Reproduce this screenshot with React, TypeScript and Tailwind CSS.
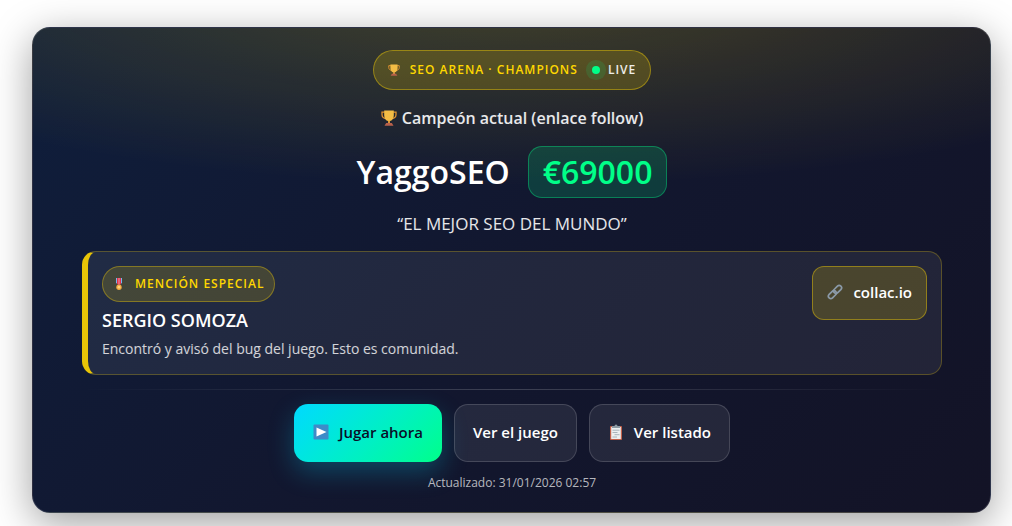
import type { ReactNode } from 'react';
import { clsx } from 'clsx';

function Trophy({ className }: { className?: string }) {
  return (
    <svg viewBox="0 0 16 16" className={className} aria-hidden="true">
      <path d="M3.8 2.2H1v2.3c0 2.4 1.6 3.9 4.2 4.2M12.2 2.2H15v2.3c0 2.4-1.6 3.9-4.2 4.2" fill="none" stroke="#e0922f" strokeWidth="1.3" />
      <path d="M3.2.5h9.6v5c0 3-1.8 5-3.8 5.6v2.2H7v-2.2C5 10.5 3.2 8.500 3.2 5.5z" fill="#f3bd45" />
      <path d="M7 10.8h2v2.4H7z" fill="#d9953a" />
      <path d="M5.2 13h5.6l1.7 2.7h-9z" fill="#b9604b" />
    </svg>
  );
}

function Medal({ className }: { className?: string }) {
  return (
    <svg viewBox="0 0 12 12" className={className} aria-hidden="true">
      <path d="M3 0h6v5L6 7 3 5z" fill="#78b7ee" />
      <path d="M4 0h4v6L6 7 4 6z" fill="#e0304a" />
      <path d="M5.6 0h.8v6h-.8z" fill="#f3b6be" />
      <circle cx="6" cy="9.200" r="2.7" fill="#f2a93f" />
      <circle cx="6" cy="9.200" r="1.4" fill="#ffd27a" />
    </svg>
  );
}

function ChainLink({ className }: { className?: string }) {
  return (
    <svg viewBox="0 0 16 16" className={className} fill="none" stroke="#8b9aa8" strokeWidth="1.7" aria-hidden="true">
      <rect x="-4.6" y="-2.4" width="9.2" height="4.8" rx="2.4" transform="translate(5.4 10.6) rotate(-45)" />
      <rect x="-4.6" y="-2.4" width="9.2" height="4.8" rx="2.4" transform="translate(10.6 5.4) rotate(-45)" />
    </svg>
  );
}

function PlayBox({ className }: { className?: string }) {
  return (
    <svg viewBox="0 0 16 16" className={className} aria-hidden="true">
      <rect x=".5" y=".5" width="15" height="15" rx="1" fill="#3d8bc8" />
      <path d="M3.5 3.5v9L13.5 8z" fill="#fff" />
    </svg>
  );
}

function Clipboard({ className }: { className?: string }) {
  return (
    <svg viewBox="0 0 16 16" className={className} aria-hidden="true">
      <rect x="2" y="2" width="12" height="14" rx="1" fill="#c2604a" />
      <path d="M3.2 3h9.6v12H3.2z" fill="#eceff1" />
      <path d="M4 4V2h2.5a1.5 1.5 0 0 1 3 0H12v2z" fill="#8d9aa3" />
      <path d="M4.5 6.2h7M4.5 8.5h5M6.5 10.7h5M4.5 13h4.5" stroke="#a9b4bb" strokeWidth="1" />
    </svg>
  );
}

function ActionLink({ href, primary, children }: { href: string; primary?: boolean; children: ReactNode }) {
  return (
    <a
      href={href}
      className={clsx(
        'flex items-center gap-2.5 rounded-[14px] border px-[18px] pt-[15px] pb-[17px] text-[15px] leading-6 font-semibold',
        primary
          ? 'border-transparent bg-linear-135 from-[#00d9ff] to-[#00ff88] bg-origin-border text-[#0a0e27] shadow-[0_10px_26px_rgba(0,217,255,0.25)]'
          : 'border-white/15 bg-white/8 text-white',
      )}
    >
      {children}
    </a>
  );
}

export default function App() {
  return (
    <main className="min-h-screen overflow-hidden bg-white pt-[27px] pr-[21px] pb-3 pl-8 font-['Open_Sans',sans-serif]">
      <section className="rounded-[18px] border border-white/12 bg-[radial-gradient(780px_206px_at_50%_-48px,rgba(255,215,0,0.22),transparent),linear-gradient(135deg,#0f1e3c,#12172f_50%,#131326)] px-12 pt-[22px] pb-[19px] text-center shadow-[0_10px_40px_rgba(0,0,0,0.38)] sm:pl-[49px]">
        <div className="inline-flex h-10 items-center gap-2.5 rounded-full border border-[#ffd700]/40 bg-[#ffd700]/18 px-3.5 align-top text-xs font-semibold tracking-[1px] text-[#ffd700]">
          <Trophy className="size-3" />
          <span>SEO ARENA · CHAMPIONS</span>
          <span className="flex items-center gap-2 pl-1 text-white/90">
            <span className="size-2 rounded-full bg-[#00ff88] ring-6 ring-[#00ff88]/12" />
            LIVE
          </span>
        </div>

        <p className="mt-4 flex items-center justify-center gap-[5px] text-base leading-6 font-semibold text-white/90">
          <Trophy className="size-4" />
          Campeón actual (enlace follow)
        </p>

        <h1 className="mt-4 flex flex-wrap items-center justify-center gap-[18px] text-[32px] leading-[38px] font-semibold text-white">
          YaggoSEO
          <span className="rounded-[14px] border border-[#00ff88]/35 bg-[#00ff88]/16 px-3.5 py-1.5 text-[#00ff88]">€69000</span>
        </h1>

        <p className="mt-3.5 text-[17px] leading-6 text-white/90">“EL MEJOR SEO DEL MUNDO”</p>

        <div className="mt-[15px] flex items-start justify-between gap-4 rounded-[14px] border border-l-6 border-[#ffd700]/25 border-l-[#e8c507] bg-white/7 p-3.5 text-left">
          <div>
            <div className="inline-flex h-9 items-center gap-2.5 rounded-full border border-[#ffd700]/35 bg-[#ffd700]/16 px-2.5 align-top text-xs font-semibold tracking-[1px] text-[#ffd700]">
              <Medal className="size-3" />
              <span>MENCIÓN ESPECIAL</span>
            </div>
            <h2 className="mt-1.5 text-lg leading-6 font-semibold text-white">SERGIO SOMOZA</h2>
            <p className="mt-1.5 text-sm leading-[22px] text-white/80">Encontró y avisó del bug del juego. Esto es comunidad.</p>
          </div>
          <a
            href="https://collac.io"
            className="flex items-center gap-2.5 rounded-xl border border-[#ffd700]/40 bg-[#ffd700]/18 px-3.5 pt-[13px] pb-[15px] text-[15px] leading-6 font-semibold text-white"
          >
            <ChainLink className="size-4" />
            collac.io
          </a>
        </div>

        <hr className="mt-3.5 h-px border-0 bg-linear-to-r from-transparent via-white/18 to-transparent" />

        <nav className="mt-3.5 flex flex-wrap justify-center gap-3">
          <ActionLink href="#jugar" primary>
            <PlayBox className="size-4" />
            Jugar ahora
          </ActionLink>
          <ActionLink href="#juego">Ver el juego</ActionLink>
          <ActionLink href="#listado">
            <Clipboard className="size-4" />
            Ver listado
          </ActionLink>
        </nav>

        <p className="mt-[11px] text-xs leading-5 text-white/70">Actualizado: 31/01/2026 02:57</p>
      </section>
    </main>
  );
}
